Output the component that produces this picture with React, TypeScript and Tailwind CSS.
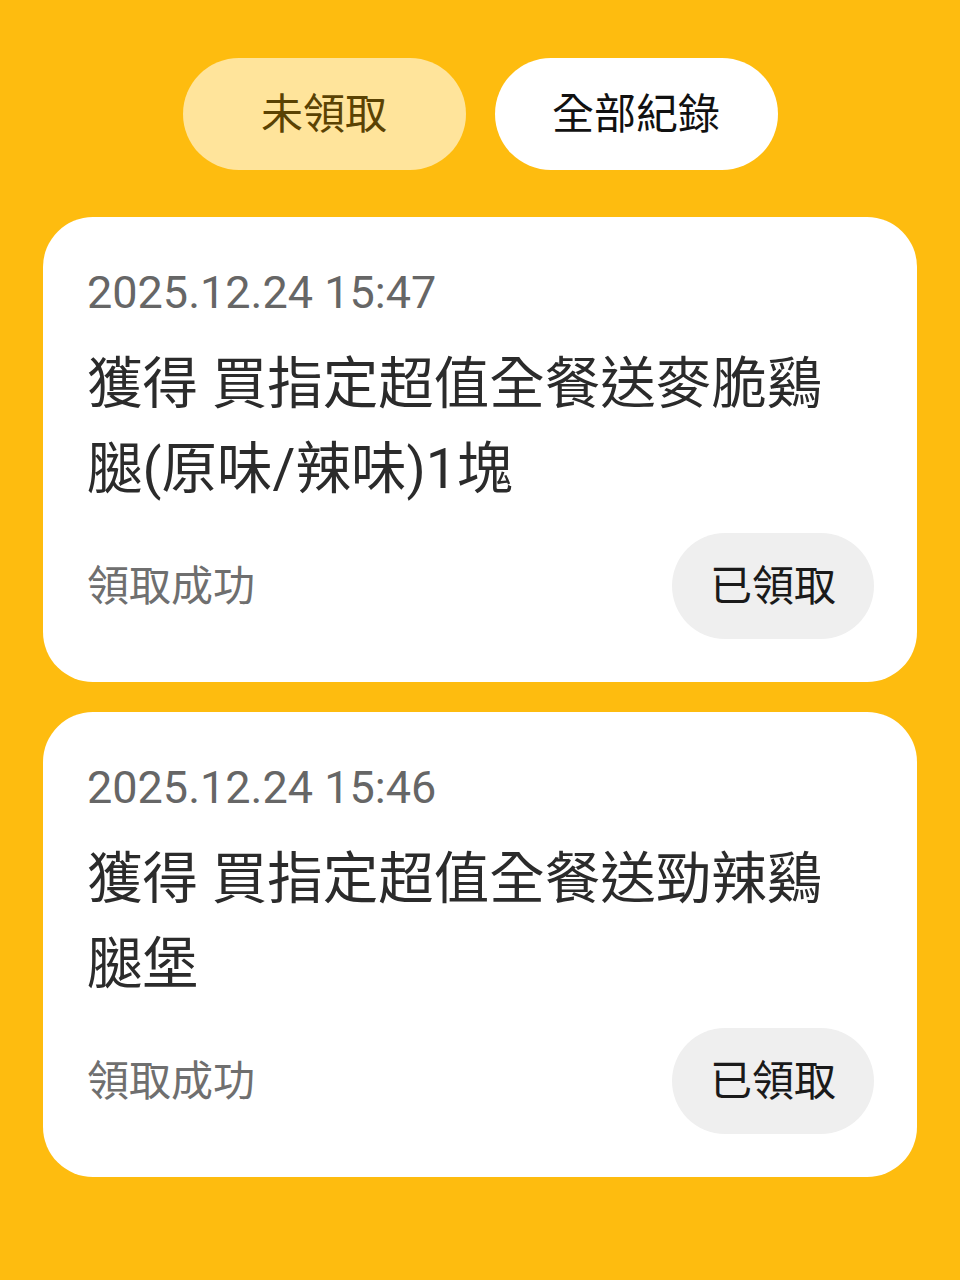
import React from 'react';

const records = [
  { time: '2025.12.24 15:47', title: '獲得 買指定超值全餐送麥脆鷄腿(原味/辣味)1塊' },
  { time: '2025.12.24 15:46', title: '獲得 買指定超值全餐送勁辣鷄腿堡' },
];

const font = { fontFamily: 'Roboto, "Noto Sans CJK TC", sans-serif' };

function RecordCard({ time, title }: { time: string; title: string }) {
  return (
    <div className="bg-white rounded-[50px] pl-[44px] pr-[43px] pt-[49px] pb-[43px]">
      <div className="text-[45px] leading-[53px] text-[#666666]">{time}</div>
      <div className="mt-[23px] pr-[40px] text-[55.5px] leading-[85px] text-[#2b2b2b]">{title}</div>
      <div className="mt-[21px] flex items-center justify-between">
        <span className="text-[42px] text-[#6f6f6f]">領取成功</span>
        <button className="h-[106px] w-[202px] rounded-full bg-[#efefef] text-[42px] text-[#1a1a1a]">已領取</button>
      </div>
    </div>
  );
}

export default function App() {
  return (
    <div className="min-h-[1280px] w-[960px] bg-[#FEBC0F] px-[43px] pt-[58px]" style={font}>
      <div className="flex justify-center gap-[29px]">
        <button className="h-[112px] w-[283px] rounded-full bg-[#FFE49B] text-[42px] text-[#5a4203]">未領取</button>
        <button className="h-[112px] w-[283px] rounded-full bg-white text-[42px] text-[#111111]">全部紀錄</button>
      </div>
      <div className="mt-[47px] flex flex-col gap-[30px]">
        {records.map(r => (
          <RecordCard key={r.time} time={r.time} title={r.title} />
        ))}
      </div>
    </div>
  );
}
